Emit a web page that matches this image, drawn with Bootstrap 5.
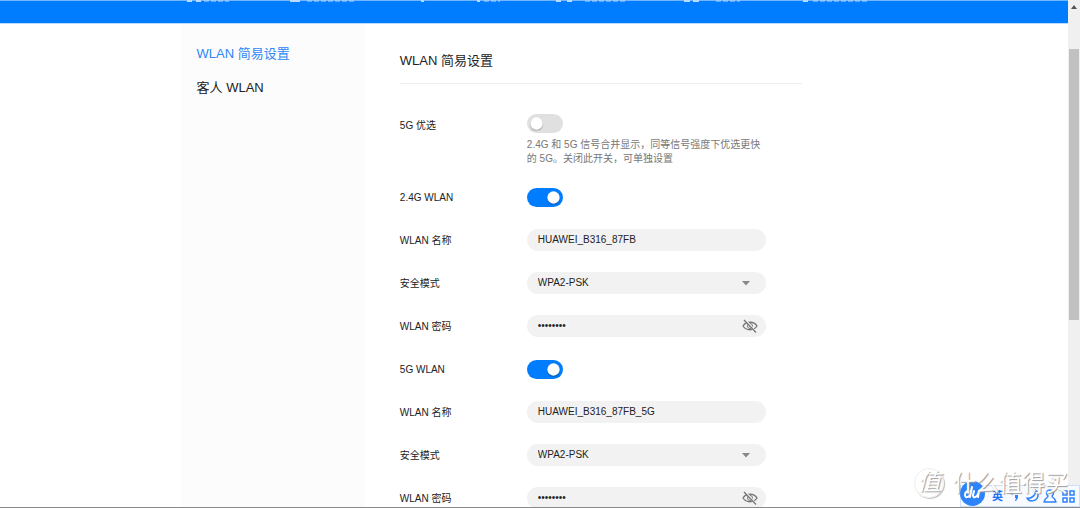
<!DOCTYPE html>
<html lang="zh-CN">
<head>
<meta charset="utf-8">
<meta name="viewport" content="width=device-width, initial-scale=1">
<title>WLAN 简易设置</title>
<link href="https://cdn.jsdelivr.net/npm/bootstrap@5.3.0/dist/css/bootstrap.min.css" rel="stylesheet">
<script src="https://cdn.jsdelivr.net/npm/bootstrap@5.3.0/dist/js/bootstrap.bundle.min.js"></script>
<style>
body{font-family:"Liberation Sans","Noto Sans CJK SC",sans-serif;font-size:10px;line-height:14px;color:#222;background:#fff}
.topbar{height:24px;background:#007dff;border-top:1px solid #73b6ff;border-bottom:1px solid #b9dbff}
.topbar svg{display:block;width:100%;height:3px;margin-top:-1px}
.page-wrap{width:66%}
.side{width:26%;background:#fcfcfc;padding:19px 15px}
.side a{display:block;font-size:13px;line-height:22px;margin-bottom:12px;color:#222;text-decoration:none}
.side a.active{color:#2b87f8}
.pane{padding:25px 84px 0 35px}
.pane h1{font-size:13px;line-height:24px;font-weight:400;padding-bottom:10px;margin-bottom:29px;border-bottom:1px solid #eee}
.set{display:grid;grid-template-columns:127px minmax(0,239px);align-items:center;min-height:22px;margin-bottom:21px}
.set>label{padding-top:2px}
.hint{color:#777;width:236px;margin:5px 0 8px}
.set.top-row{align-items:start;margin-bottom:12px}
.set.top-row>label{padding-top:6px}
.form-switch.tog{padding:0;margin:0;min-height:20px;display:flex;align-items:center}
.tog .form-check-input{float:none;margin:0;width:36px;height:19px;border:0;background-color:#e0e0e0;background-size:19px 19px;
 background-image:url("data:image/svg+xml,%3csvg xmlns='http://www.w3.org/2000/svg' viewBox='0 0 20 20'%3e%3ccircle cx='10' cy='11' r='7' fill='%23bbb'/%3e%3ccircle cx='10' cy='10' r='6.5' fill='%23fff'/%3e%3c/svg%3e")}
.tog .form-check-input:checked{background-color:#007dff;
 background-image:url("data:image/svg+xml,%3csvg xmlns='http://www.w3.org/2000/svg' viewBox='0 0 20 20'%3e%3ccircle cx='10' cy='11' r='7' fill='%230868c9'/%3e%3ccircle cx='10' cy='10' r='6.5' fill='%23fff'/%3e%3c/svg%3e")}
.pill{height:22px;min-height:22px;border:0;border-radius:11px;background-color:#f2f2f2;color:#222;font-size:10px;line-height:14px;padding:3px 34px 5px 11px}
select.pill{padding-top:4px;padding-bottom:4px;background-image:url("data:image/svg+xml,%3csvg xmlns='http://www.w3.org/2000/svg' viewBox='0 0 8 5'%3e%3cpath d='M0 0h8L4 4.500z' fill='%23888'/%3e%3c/svg%3e");background-size:8px 5px;background-position:right 16px center}
.eye{right:8px;top:3px;width:16px;height:16px;padding:0;border:0;background:none;line-height:0}
.scroller{width:12px;background:#f0f0f0;padding:5px 1px 0}
.scroller svg{display:block;width:10px;height:5px;margin-bottom:39px}
.thumb{height:54%;background:#c1c1c1}
.base-line{height:1px;background:#888}
.ime{right:0;bottom:1px;height:22px;padding:0 4px 0 31px;background:#f7faff;border:1px solid #cfe0f8;color:#1f75f5}
.ime .zi{font-size:11px;line-height:20px;font-weight:700}
.du{left:-1px;bottom:0;width:25px;height:25px}
.brandmark{right:12px;bottom:7px;color:#fff;font-size:23px;line-height:36px;text-shadow:1px 1px 1px #999;pointer-events:none}
.ring{width:30px;height:30px;line-height:27px;border:1px solid #eee;border-radius:50%;text-align:center;font-style:italic;box-shadow:1px 1px 1px #bbb;margin-right:9px}
</style>
</head>
<body class="vh-100 overflow-hidden d-flex flex-column position-relative">
<div class="d-flex flex-grow-1 overflow-hidden">
 <div class="flex-grow-1 d-flex flex-column overflow-hidden">
  <header class="topbar flex-shrink-0">
   <svg viewBox="0 0 1068 3" preserveAspectRatio="none" aria-hidden="true"><g fill="none" stroke="#b9dbff"><path d="M187 1h5m4 0h5M290 1h10M421 1h3M477 1h3M556 1h5m6 0h5M684 1h6m3 0h6M803 1h5" stroke-width="2"/><path d="M204 1h25M307 1h48M484 1h16M585 1h42M716 1h24M813 1h55" stroke-dasharray="5 2"/></g></svg>
  </header>
  <div class="page-wrap mx-auto d-flex flex-grow-1">
   <nav class="side flex-shrink-0"><a href="#" class="active">WLAN 简易设置</a><a href="#">客人 WLAN</a></nav>
   <main class="pane flex-grow-1">
    <h1>WLAN 简易设置</h1>
    <form>
     <div class="set top-row"><label for="pref">5G 优选</label>
      <div><div class="form-check form-switch tog"><input class="form-check-input" type="checkbox" role="switch" id="pref"></div>
      <p class="hint">2.4G 和 5G 信号合并显示，同等信号强度下优选更快的 5G。关闭此开关，可单独设置</p></div></div>
     <div class="set"><label for="w24">2.4G WLAN</label><div class="form-check form-switch tog"><input class="form-check-input" type="checkbox" role="switch" id="w24" checked></div></div>
     <div class="set"><label for="n24">WLAN 名称</label><input class="form-control pill" id="n24" value="HUAWEI_B316_87FB"></div>
     <div class="set"><label for="s24">安全模式</label><select class="form-select pill" id="s24"><option>WPA2-PSK</option></select></div>
     <div class="set"><label for="p24">WLAN 密码</label><div class="position-relative"><input type="password" class="form-control pill" id="p24" value="password"><button type="button" class="eye position-absolute" aria-label="显示密码"><svg width="16" height="16" viewBox="0 0 16 16" fill="none" stroke="#777"><path d="M1 8c3-5 11-5 14 0-3 5-11 5-14 0z" stroke-width="1.300"/><circle cx="8" cy="8" r="2.500"/><path d="M3 1.500l11 13" stroke="#f2f2f2" stroke-width="2"/><path d="M2 2l12 12.500" stroke-width="1.300"/></svg></button></div></div>
     <div class="set"><label for="w5">5G WLAN</label><div class="form-check form-switch tog"><input class="form-check-input" type="checkbox" role="switch" id="w5" checked></div></div>
     <div class="set"><label for="n5">WLAN 名称</label><input class="form-control pill" id="n5" value="HUAWEI_B316_87FB_5G"></div>
     <div class="set"><label for="s5">安全模式</label><select class="form-select pill" id="s5"><option>WPA2-PSK</option></select></div>
     <div class="set"><label for="p5">WLAN 密码</label><div class="position-relative"><input type="password" class="form-control pill" id="p5" value="password"><button type="button" class="eye position-absolute" aria-label="显示密码"><svg width="16" height="16" viewBox="0 0 16 16" fill="none" stroke="#777"><path d="M1 8c3-5 11-5 14 0-3 5-11 5-14 0z" stroke-width="1.300"/><circle cx="8" cy="8" r="2.500"/><path d="M3 1.500l11 13" stroke="#f2f2f2" stroke-width="2"/><path d="M2 2l12 12.500" stroke-width="1.300"/></svg></button></div></div>
    </form>
   </main>
  </div>
 </div>
 <div class="scroller flex-shrink-0" aria-hidden="true"><svg viewBox="0 0 10 5"><path d="M2 4l3-4 3 4z" fill="#555"/></svg><div class="thumb"></div></div>
</div>
<div class="base-line flex-shrink-0"></div>
<div class="ime position-absolute d-flex align-items-center gap-1">
 <svg class="du position-absolute" viewBox="0 0 25 25" fill="none" stroke="#fff" stroke-width="2" stroke-linecap="round" stroke-linejoin="round"><circle cx="12.500" cy="12.500" r="12.500" fill="#2e83fa" stroke="none"/><path d="M10 11c-3-2-5 0-5 3s4 3 5-1l2-7-2 10M14 10l-1 4c0 4 4 2 5-1l1-3-1 6"/></svg>
 <span class="zi">英</span>
 <svg width="14" height="14" viewBox="0 0 14 14" fill="#2e83fa"><circle cx="5" cy="4" r="1.500"/><path d="M8 6h3v3l-2 3H8l1-3H8z"/></svg>
 <svg width="14" height="14" viewBox="0 0 14 14" fill="none" stroke="#2e83fa" stroke-width="1.500" stroke-linejoin="round"><path d="M10 1c2 4-3 9-8 8 3 5 11 3 11-3 0-2-1-4-3-5z"/></svg>
 <svg width="14" height="14" viewBox="0 0 14 14" fill="none" stroke="#2e83fa" stroke-width="1.500" stroke-linejoin="round"><path d="M5 7C2 4 4 1 7 1s5 3 2 6c0 2 3 2 3 4l1 2H1l1-2c0-2 3-2 3-4z"/></svg>
 <svg width="14" height="14" viewBox="0 0 14 14" fill="none" stroke="#2e83fa" stroke-width="1.500"><path d="M2 2h4v4H2zM9 2h4v4H9zM2 9h4v4H2zM9 9h4v4H9z"/></svg>
</div>
<div class="brandmark position-absolute d-flex align-items-center"><span class="ring">值</span><span>什么值得买</span></div>
</body>
</html>
